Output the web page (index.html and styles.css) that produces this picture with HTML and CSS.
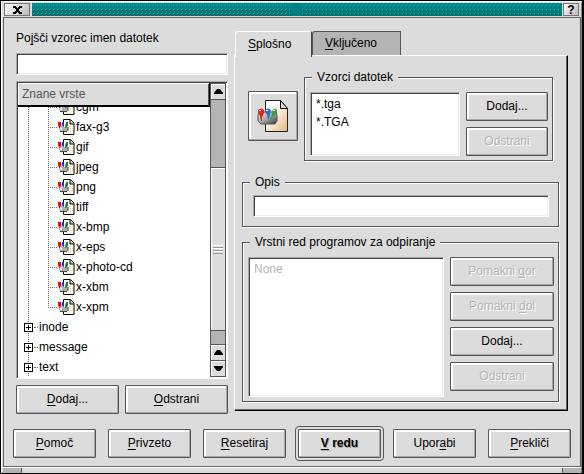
FILE: index.html
```html
<!DOCTYPE html>
<html lang="sl">
<head>
<meta charset="utf-8">
<title>Vrste datotek</title>
<link rel="stylesheet" href="styles.css">
</head>
<body>
<svg width="0" height="0" class="defs" aria-hidden="true">
  <defs>
    <linearGradient id="cup" x1="0" y1="0" x2="1" y2="1">
      <stop offset="0" stop-color="#eee"/><stop offset=".5" stop-color="#aaa"/><stop offset="1" stop-color="#333"/>
    </linearGradient>
    <linearGradient id="sheet" x1="0" y1="0" x2="1" y2="1">
      <stop offset=".3" stop-color="#fff"/><stop offset="1" stop-color="#e3b878"/>
    </linearGradient>
    <symbol id="file" viewBox="0 0 17 16">
      <path d="M5.500.5H12.500L16 4V15.500H5.500Z" fill="#fffef2" stroke="#000"/>
      <path d="M12 1v4h4" fill="#ccc" stroke="#000"/>
      <path d="M8 13.500h1m1 0h1m1 0h1M12 11.500h1m1 0h1M12 9.500h1m1 0h1M12 7.500h1" stroke="#f0dc90"/>
      <path d="M2 5h7l1 3v3l-1 2H3l-2-2V7z" fill="#b0b0b0"/>
      <path d="M2 12.500h7M10 8v4" fill="none" stroke="#444"/>
      <path d="M2 8h2v3H2z" fill="#e8e8e8"/>
      <path d="M0 3h3v3L2 9H1L0 6z" fill="#e01010"/>
      <path d="M4 3h2v2l1 3H6L4 6z" fill="#1830f0"/>
      <path d="M6 5h1v3H6z" fill="#fff"/>
      <path d="M8 3h2v3L8 9H7z" fill="#108820"/>
    </symbol>
  </defs>
</svg>
<main class="window">
  <header class="titlebar">
    <button class="close" aria-label="Zapri"><svg width="9" height="8" viewBox="0 0 9 8"><path d="M0 0h3v1h1v1h1V1h1V0h3v2H7v1H6v2h1v1h2v2H6V7H5V6H4v1H3v1H0V6h2V5h1V3H2V2H0z"/></svg></button>
    <div class="grip"></div><div class="grip"></div>
    <button class="help">?</button>
  </header>

  <div class="body">
    <div class="columns">
      <section class="left">
        <label for="pattern">Po<u>j</u>šči vzorec imen datotek</label>
        <input id="pattern" class="field" type="text">
        <div class="listview">
          <div class="pane">
            <div class="head">Znane vrste</div>
            <div class="clip">
              <ul class="tree">
                <li class="child"><svg><use href="#file"/></svg>cgm</li>
                <li class="child"><svg><use href="#file"/></svg>fax-g3</li>
                <li class="child"><svg><use href="#file"/></svg>gif</li>
                <li class="child"><svg><use href="#file"/></svg>jpeg</li>
                <li class="child"><svg><use href="#file"/></svg>png</li>
                <li class="child"><svg><use href="#file"/></svg>tiff</li>
                <li class="child"><svg><use href="#file"/></svg>x-bmp</li>
                <li class="child"><svg><use href="#file"/></svg>x-eps</li>
                <li class="child"><svg><use href="#file"/></svg>x-photo-cd</li>
                <li class="child"><svg><use href="#file"/></svg>x-xbm</li>
                <li class="child last"><svg><use href="#file"/></svg>x-xpm</li>
                <li class="node"><span class="plus"></span>inode</li>
                <li class="node"><span class="plus"></span>message</li>
                <li class="node"><span class="plus"></span>text</li>
              </ul>
            </div>
          </div>
          <div class="scrollbar">
            <button class="arrow" aria-label="Gor"><svg width="9" height="5"><path d="M3 0h3l3 4v1H0V4z"/></svg></button>
            <div class="space"></div>
            <div class="thumb"><i></i><i></i><i></i></div>
            <div class="space short"></div>
            <button class="arrow" aria-label="Gor"><svg width="9" height="5"><path d="M3 0h3l3 4v1H0V4z"/></svg></button>
            <button class="arrow" aria-label="Dol"><svg width="9" height="5"><path d="M3 5h3l3-4V0H0v1z"/></svg></button>
          </div>
        </div>
        <div class="pair">
          <button class="btn"><u>D</u>odaj...</button>
          <button class="btn"><u>O</u>dstrani</button>
        </div>
      </section>

      <section class="right">
        <div class="tabs" role="tablist">
          <button class="tab active" role="tab" aria-selected="true"><u>S</u>plošno</button>
          <button class="tab" role="tab" aria-selected="false"><u>V</u>ključeno</button>
        </div>
        <div class="panel">
          <div class="top">
            <button class="btn iconbtn" aria-label="Ikona">
              <svg width="32" height="32" viewBox="0 0 32 32">
                <path d="M8.500.5H23.500L30.500 8.500V31.500H8.500Z" fill="url(#sheet)" stroke="#222"/>
                <path d="M23.500.5V8.500H30.500Z" fill="#ddd" stroke="#000"/>
                <path d="M2 12h17l1 3v6l-2 3H4l-3-3v-6z" fill="url(#cup)" stroke="#555"/>
                <path d="M1 10q3-3 6 0v3l-2 4v4H4l-1-5-2-4z" fill="#d8281c"/>
                <path d="M8 10q3-3 6 0l-1 5-1 4h-1l-1-4-2-3z" fill="#2878c8"/>
                <path d="M15 11q3-4 5-1v3l-4 4-2 3h-1l2-6z" fill="#38a048"/>
                <path d="M2 10.500h2M9 10.500h2M16 10.500h2" stroke="#fff" fill="none"/>
              </svg>
            </button>
            <fieldset>
              <legend>Vzorci datotek</legend>
              <div class="inner">
                <ul class="listbox"><li>*.tga</li><li>*.TGA</li></ul>
                <div class="stack narrow">
                  <button class="btn">Dodaj...</button>
                  <button class="btn" disabled>Odstrani</button>
                </div>
              </div>
            </fieldset>
          </div>
          <fieldset class="opis">
            <legend>Opis</legend>
            <div class="inner wide"><input class="field" type="text" aria-label="Opis"></div>
          </fieldset>
          <fieldset class="apps">
            <legend>Vrstni red programov za odpiranje</legend>
            <div class="inner">
              <ul class="listbox muted"><li>None</li></ul>
              <div class="stack">
                <button class="btn" disabled>Pomakni <u>g</u>or</button>
                <button class="btn" disabled>Pomakni <u>d</u>ol</button>
                <button class="btn">Dodaj...</button>
                <button class="btn" disabled>Odstrani</button>
              </div>
            </div>
          </fieldset>
        </div>
      </section>
    </div>

    <footer class="actions">
      <button class="btn"><u>P</u>omoč</button>
      <button class="btn"><u>P</u>rivzeto</button>
      <button class="btn"><u>R</u>esetiraj</button>
      <button class="btn default"><u>V</u> redu</button>
      <button class="btn">Upor<u>a</u>bi</button>
      <button class="btn"><u>P</u>rekliči</button>
    </footer>
  </div>
  <div class="resize"><span></span><span></span><span></span></div>
</main>
</body>
</html>
```
FILE: styles.css
```css
* { box-sizing: border-box; }
body {
  margin: 0;
  background: #000;
  font: 12px/15px "Liberation Sans", Arial, sans-serif;
  color: #000;
}
button, input { font: inherit; color: inherit; margin: 0; padding: 0; border-radius: 0; }
ul { list-style: none; margin: 0; padding: 0; }
u { text-underline-offset: 2px; text-decoration-thickness: 1px; text-decoration-skip-ink: none; }
.defs { position: absolute; }

.window {
  display: flex;
  flex-direction: column;
  min-height: 100vh;
  background: #dcdcdc;
  border: 1px solid #000;
  border-right-width: 2px;
  box-shadow: inset 1px 1px 0 #fff, inset -1px -1px 0 #808080;
  padding: 2px 1px 0 2px;
}

.titlebar { display: flex; height: 14px; margin: 0 2px 0 1px; }
.titlebar button {
  display: flex;
  align-items: center;
  justify-content: center;
  height: 13px;
  background: linear-gradient(135deg, #fff, #b8b8b8);
  border: 1px solid #777;
  line-height: 12px;
  font-weight: bold;
}
.titlebar .close { width: 26px; margin-right: 2px; }
.titlebar .help { width: 16px; margin-left: 1px; }
.grip {
  flex: 1;
  height: 13px;
  background:
    conic-gradient(from 270deg at 1px 1px, #2cb0ac 90deg, transparent 0) 1px 2px / 4px 4px,
    conic-gradient(from 270deg at 1px 1px, #00504f 90deg, transparent 0) 2px 3px / 4px 4px,
    linear-gradient(#009090, #007474);
}
.grip + .grip { border-left: 8px solid #008080; }

.body {
  flex: 1;
  display: flex;
  flex-direction: column;
  border: 1px solid #666;
  padding: 13px 0 8px;
  box-shadow: inset -1px 0 0 #ccc;
}
.columns {
  flex: 1;
  display: grid;
  grid-template-columns: 212fr 334fr;
  column-gap: 6px;
  padding: 0 12px;
}

.left { display: flex; flex-direction: column; }
.left label { padding-bottom: 7px; }
.field {
  display: block;
  width: 100%;
  height: 22px;
  padding: 0 4px;
  background: #fff;
  border: 1px solid;
  border-color: #a8a8a8 #fff #fff #a8a8a8;
  box-shadow: inset 1px 1px 0 #444, inset -1px -1px 0 #eee;
}
.listview {
  flex: 1;
  display: flex;
  margin: 6px 0;
  padding: 1px;
  background: #fff;
  border: 1px solid;
  border-color: #a8a8a8 #fff #fff #a8a8a8;
  box-shadow: inset 1px 1px 0 #444;
}
.pane { flex: 1; display: flex; flex-direction: column; }
.head {
  height: 24px;
  padding: 4px;
  background: #dcdcdc;
  border: solid #000;
  border-width: 0 1px 2px 0;
  box-shadow: inset 1px 1px 0 #fff, inset -1px 0 0 #555;
  color: #555;
}
.clip { flex: 1; height: 0; overflow: hidden; }
.tree { margin-top: -10px; }
.tree li {
  display: flex;
  align-items: center;
  height: 20px;
  background: repeating-linear-gradient(#666 0 1px, #fff 1px 2px) 10px 0 / 1px 100% no-repeat;
}
.tree .child { padding-left: 30px; }
.tree .child::before {
  content: "";
  width: 9px;
  height: 20px;
  background:
    repeating-linear-gradient(#666 0 1px, #fff 1px 2px) 0 0 / 1px 100% no-repeat,
    repeating-linear-gradient(90deg, #666 0 1px, #fff 1px 2px) 0 10px / 100% 1px no-repeat;
}
.tree .last::before { background-size: 1px 10px, 100% 1px; }
.tree svg { width: 17px; height: 16px; margin: 0 1px; }
.tree .node { padding-left: 6px; }
.plus {
  width: 9px;
  height: 9px;
  border: 1px solid #000;
  background:
    linear-gradient(#000, #000) 1px 3px / 5px 1px no-repeat,
    linear-gradient(#000, #000) 3px 1px / 1px 5px no-repeat,
    #fff;
}
.plus::after {
  content: "";
  display: block;
  width: 4px;
  margin: 3px 0 0 9px;
  border-top: 1px dotted #666;
}
.tree .plus { margin-right: 6px; }

.scrollbar {
  width: 16px;
  display: flex;
  flex-direction: column;
  background: #b4b4b4;
  border: solid #555;
  border-width: 1px 1px 0;
}
.arrow, .thumb {
  display: flex;
  flex-direction: column;
  align-items: center;
  justify-content: center;
  background: #dcdcdc;
  border: 0;
  border-bottom: 1px solid #555;
  box-shadow: inset 1px 1px 0 #fff;
}
.arrow { height: 16px; }
.space { flex: 68; border-bottom: 1px solid #555; }
.thumb { flex: 164; }
.thumb i { width: 10px; height: 3px; border-top: 1px solid #fff; border-bottom: 1px solid #999; }
.space.short { flex: 13; }

.pair { display: flex; gap: 6px; }
.pair .btn { flex: 1; }
.btn {
  height: 29px;
  background: #dcdcdc;
  border: 1px solid #555;
  border-radius: 1px;
  box-shadow: inset -1px -1px 0 #aaa, inset 2px 2px 0 #fff;
}
.btn:disabled { color: #b4b4b4; text-shadow: 1px 1px 0 #fff; }

.tabs { display: flex; height: 24px; padding-left: 1px; }
.tab {
  width: 89px;
  padding: 0 0 0 12px;
  text-align: left;
  background: #b4b4b4;
  border: solid #555;
  border-width: 1px 1px 0 1px;
  border-radius: 3px 0 0 0;
}
.tab.active {
  width: 77px;
  height: 26px;
  z-index: 1;
  background: #dcdcdc;
  border-color: #fff #444 #fff #fff;
}
.panel {
  border: 1px solid;
  border-color: #fff #000 #000 #fff;
  box-shadow: inset -1px -1px 0 #666;
  padding: 14px 8px 8px 7px;
}
.right { display: flex; flex-direction: column; }
.left, .right { min-width: 0; }
.top { display: flex; align-items: center; gap: 6px; padding: 0 6px; }
.top fieldset { flex: 1; }
.iconbtn { width: 50px; height: 50px; display: flex; align-items: center; justify-content: center; }

fieldset {
  min-width: 0;
  margin: 0;
  padding: 0;
  border: 1px solid #555;
  box-shadow: 1px 1px 0 #fff, inset 1px 1px 0 #fff;
}
legend { margin-left: 7px; padding: 0 5px; background: #dcdcdc; }
.inner { display: flex; gap: 6px; padding: 7px 4px 4px 5px; }
.inner.wide { padding: 5px 9px 9px 10px; }
.opis { margin-top: 14px; }
.apps { margin-top: 8px; }
.listbox {
  flex: 1;
  padding: 2px 5px;
  background: #fff;
  border: 1px solid;
  border-color: #a8a8a8 #fff #fff #a8a8a8;
  box-shadow: inset 1px 1px 0 #444, inset -1px -1px 0 #eee;
  line-height: 18px;
}
.muted { color: #b4b4b4; }
.stack { display: flex; flex-direction: column; gap: 6px; width: 104px; }
.stack.narrow { width: 82px; }
.apps .stack { padding-bottom: 6px; }

.actions { display: flex; gap: 12px; padding: 0 9px; margin-top: 15px; }
.actions .btn { flex: 1; }
.default { font-weight: bold; text-shadow: 1px 1px 0 #aaa; outline: 1px solid #555; outline-offset: 2px; }

.resize { display: flex; height: 6px; border-top: 1px solid #fff; }
.resize span { width: 18px; background: #b4b4b4; }
.resize span:nth-child(2) { flex: 1; background: #dcdcdc; border: solid #555; border-width: 0 1px; }
```
